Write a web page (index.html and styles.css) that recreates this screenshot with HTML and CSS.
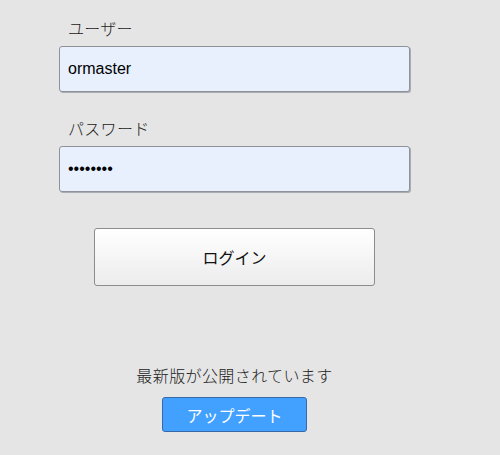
FILE: index.html
```html
<!DOCTYPE html>
<html lang="ja">
<head>
<meta charset="utf-8">
<link rel="stylesheet" href="styles.css">
</head>
<body>
<div class="page">
  <form class="login">
    <div class="field">
      <label class="label" for="user">ユーザー</label>
      <input class="input" id="user" type="text" value="ormaster">
    </div>
    <div class="field">
      <label class="label" for="pass">パスワード</label>
      <input class="input" id="pass" type="password" value="ormaster">
    </div>
    <button class="login-btn" type="button">ログイン</button>
  </form>
  <div class="update">
    <p class="update-msg">最新版が公開されています</p>
    <button class="update-btn" type="button">アップデート</button>
  </div>
</div>
</body>
</html>
```

FILE: styles.css
```css
html, body {
  margin: 0;
  padding: 0;
  background: #e5e5e5;
}
body {
  font-family: "Noto Sans CJK JP", "Liberation Sans", sans-serif;
  font-size: 16px;
  font-weight: 300;
  line-height: 20px;
  color: #222;
}
.page {
  width: 469px;
  padding-top: 18px;
  display: flex;
  flex-direction: column;
  align-items: center;
}
.login {
  width: 351px;
  display: flex;
  flex-direction: column;
  align-items: center;
  margin: 0;
}
.field {
  width: 100%;
  display: flex;
  flex-direction: column;
  gap: 8px;
  margin-bottom: 26px;
}
.field:nth-child(2) {
  margin-bottom: 36px;
}
.label {
  padding-left: 9px;
  height: 20px;
  color: #222;
  letter-spacing: 0.3px;
}
.input {
  box-sizing: border-box;
  width: 351px;
  height: 46px;
  margin: 0;
  padding: 0 8px;
  border: 1px solid #8f9399;
  box-shadow: 1px 1px 0 #a9adb2;
  border-radius: 3px;
  background: #e8f0fe;
  font-family: "Liberation Sans", Arial, sans-serif;
  font-size: 16px;
  font-weight: 400;
  color: #000;
  outline: none;
}
.login-btn {
  box-sizing: border-box;
  width: 281px;
  height: 58px;
  margin: 0;
  border: 1px solid #8c8c8c;
  border-radius: 3px;
  background: linear-gradient(#ffffff, #ececec);
  font-family: "Noto Sans CJK JP", sans-serif;
  font-size: 16px;
  font-weight: 400;
  color: #111;
}
.update {
  margin-top: 79px;
  display: flex;
  flex-direction: column;
  align-items: center;
  gap: 12px;
}
.update-msg {
  margin: 0;
  height: 20px;
  color: #222;
  letter-spacing: 0.4px;
}
.update-btn {
  box-sizing: border-box;
  width: 145px;
  height: 35px;
  margin: 0;
  border: 1px solid #3968a8;
  border-radius: 3px;
  background: #42a0ff;
  font-family: "Noto Sans CJK JP", sans-serif;
  font-size: 16px;
  font-weight: 400;
  color: #fff;
}
```
